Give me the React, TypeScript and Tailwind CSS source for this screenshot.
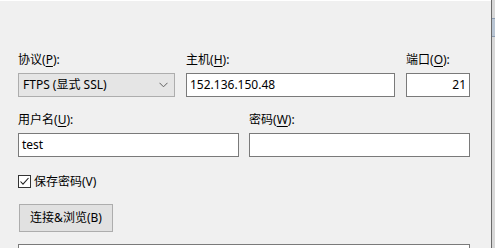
import React from "react";

const font = { fontFamily: '"Noto Sans", "Noto Sans CJK SC", sans-serif' };

// Windows-style label with mnemonic underline
function Label({ text, hot, tail = "):" }: { text: string; hot: string; tail?: string }) {
  return (
    <div className="h-[16px] shrink-0 text-[12px] leading-[16px] text-black whitespace-nowrap">
      {text}(<span className="underline underline-offset-2">{hot}</span>{tail}
    </div>
  );
}

function TextBox({ value, className = "", right = false }: { value?: string; className?: string; right?: boolean }) {
  return (
    <div
      className={`h-[24px] shrink-0 border border-[#7a7a7a] bg-white flex items-center px-[3px] text-[12px] text-black ${
        right ? "justify-end" : ""
      } ${className}`}
    >
      {value}
    </div>
  );
}

export default function App() {
  return (
    <div className="w-[495px] h-[248px] flex overflow-hidden" style={font}>
      {/* dialog body */}
      <div className="flex-1 min-h-0 overflow-hidden bg-[#f0f0f0] border-t border-white flex flex-col pl-[18px] pt-[51px]">
        {/* row 1 */}
        <div className="flex shrink-0">
          <div className="w-[157px] flex flex-col gap-[5px]">
            <Label text="协议" hot="P" />
            <div className="h-[24px] shrink-0 border border-[#adadad] bg-[#e5e5e5] flex items-center justify-between pl-[4px] pr-[6px] text-[12px] text-black">
              <span>FTPS (显式 SSL)</span>
              <svg width="9" height="6" viewBox="0 0 9 6">
                <path d="M0.5 0.8 L4.5 4.8 L8.5 0.8" fill="none" stroke="#606060" strokeWidth="1" />
              </svg>
            </div>
          </div>
          <div className="w-[209px] ml-[11px] flex flex-col gap-[5px]">
            <Label text="主机" hot="H" />
            <TextBox value="152.136.150.48" />
          </div>
          <div className="w-[64px] ml-[11px] flex flex-col gap-[5px]">
            <Label text="端口" hot="O" />
            <TextBox value="21" right />
          </div>
        </div>

        {/* row 2 */}
        <div className="flex shrink-0 mt-[15px]">
          <div className="w-[221px] flex flex-col gap-[5px]">
            <Label text="用户名" hot="U" />
            <TextBox value="test" />
          </div>
          <div className="w-[221px] ml-[10px] flex flex-col gap-[5px]">
            <Label text="密码" hot="W" />
            <TextBox />
          </div>
        </div>

        {/* save password */}
        <div className="flex shrink-0 items-center mt-[18px] h-[13px]">
          <div className="w-[13px] h-[13px] border border-[#333333] bg-white flex items-center justify-center">
            <svg width="11" height="11" viewBox="0 0 11 11">
              <path d="M1.5 5.5 L4 8.2 L9.5 2" fill="none" stroke="#222" strokeWidth="1.1" />
            </svg>
          </div>
          <span className="ml-[3px] text-[12px] leading-[16px] text-black">保存密码(V)</span>
        </div>

        {/* connect button */}
        <div className="shrink-0 mt-[16px] ml-[1px] w-[94px] h-[28px] border border-[#adadad] bg-[#e1e1e1] flex items-center justify-center text-[12px] text-black">
          连接&amp;浏览(B)
        </div>

        {/* next box, cut off */}
        <div className="shrink-0 mt-[12px] w-[452px] h-[20px] border border-[#7a7a7a] bg-white" />
      </div>

      {/* window edge / scrollbar */}
      <div className="w-[1px] bg-[#6b6b6b]" />
      <div className="w-[3px] bg-[#d8d8d8] flex flex-col">
        <div className="h-[18px]" />
        <div className="h-[19px] bg-[#b9c5d3] border-y border-[#8b9bb0]" />
      </div>
    </div>
  );
}
